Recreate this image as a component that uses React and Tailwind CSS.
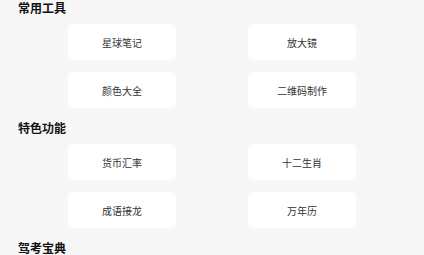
import React from "react";

const sections = [
  { title: "常用工具", items: ["星球笔记", "放大镜", "颜色大全", "二维码制作"] },
  { title: "特色功能", items: ["货币汇率", "十二生肖", "成语接龙", "万年历"] },
  { title: "驾考宝典", items: [] },
];

export default function App() {
  return (
    <div
      className="w-[424px] h-[255px] overflow-hidden bg-[#f7f7f7]"
      style={{ fontFamily: '"Noto Sans CJK SC", "Noto Sans", sans-serif' }}
    >
      {sections.map((s) => (
        <section key={s.title} className="mb-3">
          <h2 className="h-4 pl-[18px] text-[12px] leading-4 font-bold text-[#111111]">
            {s.title}
          </h2>
          {s.items.length > 0 && (
            <div className="mt-2 grid grid-cols-2 justify-items-center gap-y-3 px-8">
              {s.items.map((it) => (
                <div
                  key={it}
                  className="flex h-9 w-[108px] items-center justify-center rounded-[5px] bg-white text-[10px] text-[#333333]"
                >
                  {it}
                </div>
              ))}
            </div>
          )}
        </section>
      ))}
    </div>
  );
}
